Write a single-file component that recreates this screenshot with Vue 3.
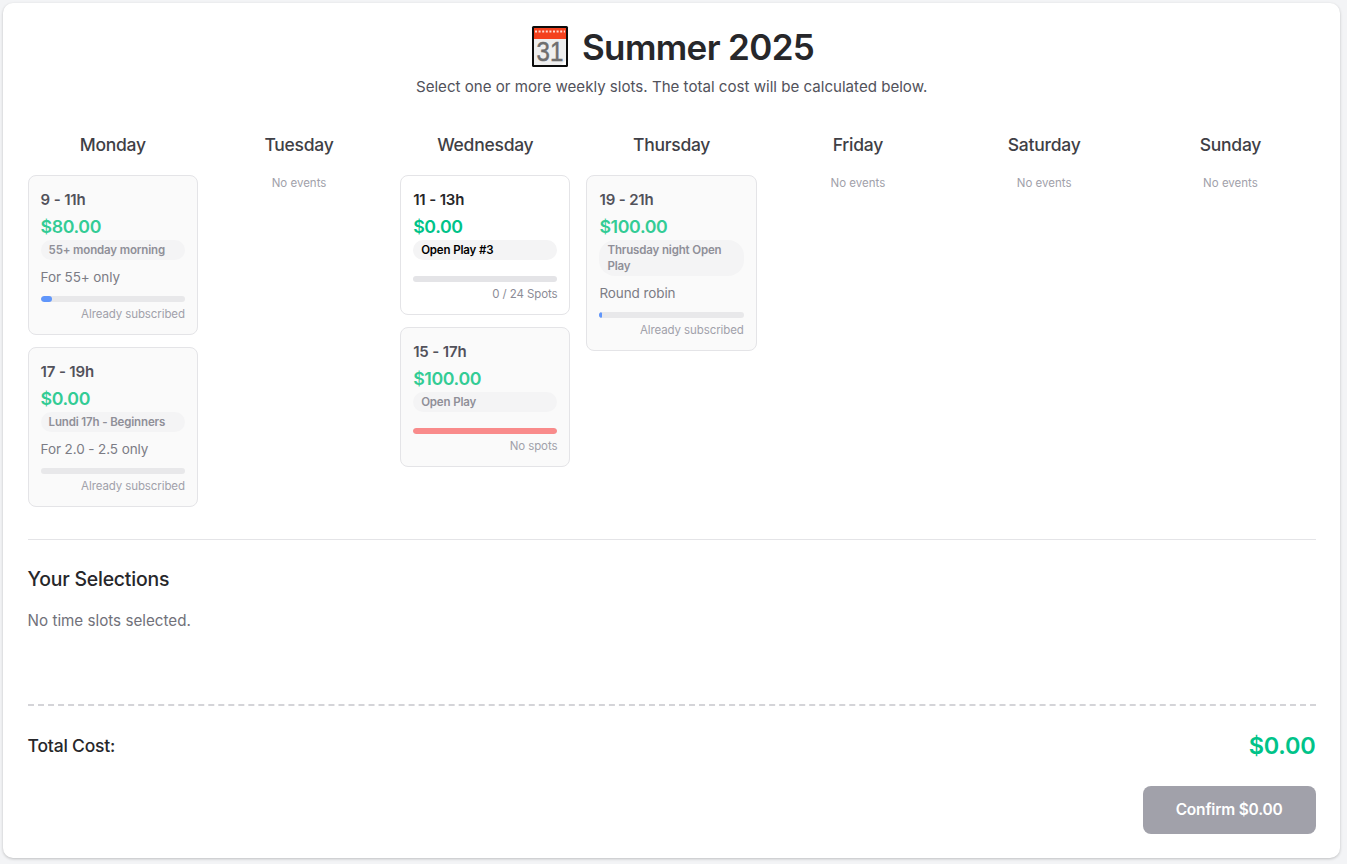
<script setup>
const days = [
  { name: 'Monday', events: [
    { time: '9 - 11h', price: '$80.00', tag: '55+ monday morning', note: 'For 55+ only', fill: 8, color: '#6096fb', status: 'Already subscribed' },
    { time: '17 - 19h', price: '$0.00', tag: 'Lundi 17h - Beginners', note: 'For 2.0 - 2.5 only', fill: 0, color: '#6096fb', status: 'Already subscribed' },
  ] },
  { name: 'Tuesday', events: [] },
  { name: 'Wednesday', events: [
    { time: '11 - 13h', price: '$0.00', tag: 'Open Play #3', fill: 0, color: '#6096fb', status: '0 / 24 Spots', active: true },
    { time: '15 - 17h', price: '$100.00', tag: 'Open Play', fill: 100, color: '#f98b8b', status: 'No spots' },
  ] },
  { name: 'Thursday', events: [
    { time: '19 - 21h', price: '$100.00', tag: 'Thrusday night Open Play', note: 'Round robin', fill: 2, color: '#6096fb', status: 'Already subscribed' },
  ] },
  { name: 'Friday', events: [] },
  { name: 'Saturday', events: [] },
  { name: 'Sunday', events: [] },
]
</script>

<template>
  <div class="page">
    <main class="panel">
      <header class="head">
        <h1 class="title">
          <svg class="cal" width="38" height="41" viewBox="0 0 38 41" aria-hidden="true">
            <rect x="1" y="0" width="36" height="41" rx="1.5" fill="#0c0c0c" />
            <rect x="3" y="2" width="32" height="37" fill="#efefef" />
            <rect x="3" y="2" width="32" height="11" fill="#f4411e" />
            <path d="M4 5.5h30" stroke="#ffd9d0" stroke-width="2" stroke-dasharray="2 1.6" />
            <text class="cal-num" text-anchor="middle" transform="translate(19 35) scale(.86 1)">31</text>
            <path d="M35 34v5h-5z" fill="#fff" />
          </svg>
          <span>Summer 2025</span>
        </h1>
        <p class="sub">Select one or more weekly slots. The total cost will be calculated below.</p>
      </header>

      <section class="week">
        <div v-for="d in days" :key="d.name" class="day">
          <h2 class="day-name">{{ d.name }}</h2>
          <p v-if="!d.events.length" class="none">No events</p>
          <article v-for="e in d.events" :key="e.time" class="slot" :class="{ active: e.active }">
            <div class="time">{{ e.time }}</div>
            <div class="price">{{ e.price }}</div>
            <div class="tag">{{ e.tag }}</div>
            <div v-if="e.note" class="note">{{ e.note }}</div>
            <div class="bar" :class="{ 'with-note': e.note }"><div class="fill" :style="{ width: e.fill + '%', background: e.color }"></div></div>
            <div class="status">{{ e.status }}</div>
          </article>
        </div>
      </section>

      <section class="selections">
        <h3 class="sel-title">Your Selections</h3>
        <p class="sel-empty">No time slots selected.</p>
      </section>

      <div class="total">
        <span class="total-label">Total Cost:</span>
        <span class="total-value">$0.00</span>
      </div>
      <div class="actions">
        <button class="confirm" disabled>Confirm $0.00</button>
      </div>
    </main>
  </div>
</template>

<style>
html, body { margin: 0; background: #f3f4f6; }
</style>

<style scoped>
.page { padding: 3px 7px 6px 3px; font-family: Inter, "Noto Sans", sans-serif; color: #27272a; }
.panel { background: #fff; border-radius: 10px; box-shadow: 0 1px 3px rgba(0,0,0,.22); padding: 23px 24.4px 24px 24.6px; height: 855px; box-sizing: border-box; display: flex; flex-direction: column; }
.head { text-align: center; }
.title { margin: 0; padding-left: 2px; font-size: 35px; line-height: 40px; font-weight: 600; letter-spacing: -0.65px; display: flex; justify-content: center; align-items: center; gap: 13px; color: #27272a; }
.cal { flex: none; }
.cal-num { font-family: "Liberation Sans", sans-serif; font-size: 28px; font-weight: 400; fill: #6e6e6e; letter-spacing: 0; stroke: #6e6e6e; stroke-width: .5px; }
.sub { margin: 8px 0 0; font-size: 15.1px; line-height: 24px; color: #52525b; }
.week { display: grid; grid-template-columns: repeat(7, minmax(0, 1fr)); gap: 16px; margin-top: 32px; padding-bottom: 20px; }
.day-name { margin: 0 0 16px; font-size: 17.5px; line-height: 28px; font-weight: 500; text-align: center; color: #3f3f46; letter-spacing: -0.25px; }
.none { margin: 0; text-align: center; font-size: 11.5px; line-height: 16px; color: #a1a1aa; }
.slot { box-sizing: border-box; border: 1px solid #e4e4e7; border-radius: 8px; padding: 12px; margin-bottom: 12px; background: #fafafa; }
.time { font-size: 15px; line-height: 24px; font-weight: 600; color: #52525b; letter-spacing: -0.15px; }
.price { padding-top: 1px; font-size: 17.8px; line-height: 27px; font-weight: 600; color: #33cc95; letter-spacing: -0.4px; }
.tag { border-radius: 16px; background: #f4f4f5; padding: 2px 8px; font-size: 11.5px; line-height: 16px; font-weight: 600; color: #8f8f98; letter-spacing: -0.15px; }
.note { font-size: 13.5px; line-height: 20px; color: #7c7c85; margin-top: 7px; letter-spacing: -0.1px; }
.bar { height: 6px; border-radius: 3px; background: #e8e8ea; overflow: hidden; margin-top: 16px; }
.bar.with-note { margin-top: 9px; }
.fill { height: 100%; border-radius: 3px; }
.status { margin-top: 4px; text-align: right; font-size: 11.5px; line-height: 16px; color: #a1a1aa; letter-spacing: -0.1px; }
.slot.active { background: #fff; }
.slot.active .time { color: #27272a; }
.slot.active .price { color: #00c389; }
.slot.active .tag { color: #000; }
.slot.active .status { color: #8c8c96; }
.slot.active .bar { background: #e4e4e7; }
.selections { border-top: 1px solid #e4e4e7; padding-top: 25px; }
.sel-title { margin: 0; font-size: 19.4px; line-height: 28px; font-weight: 500; color: #27272a; letter-spacing: -0.2px; }
.sel-empty { margin: 16px 0 0; font-size: 15.2px; line-height: 24px; color: #71717a; }
.total { margin-top: auto; border-top: 2px dashed #d4d4d8; padding-top: 24px; display: flex; justify-content: space-between; align-items: center; }
.total-label { font-size: 17.5px; line-height: 32px; font-weight: 500; color: #27272a; letter-spacing: -0.2px; }
.total-value { font-size: 23.5px; line-height: 32px; font-weight: 600; color: #00c389; letter-spacing: -0.2px; }
.actions { display: flex; justify-content: flex-end; margin-top: 24px; }
.confirm { width: 173px; height: 48px; border: 0; border-radius: 8px; background: #a1a1aa; color: #fff; font: 600 15.5px/24px Inter, sans-serif; letter-spacing: -0.2px; }
</style>
